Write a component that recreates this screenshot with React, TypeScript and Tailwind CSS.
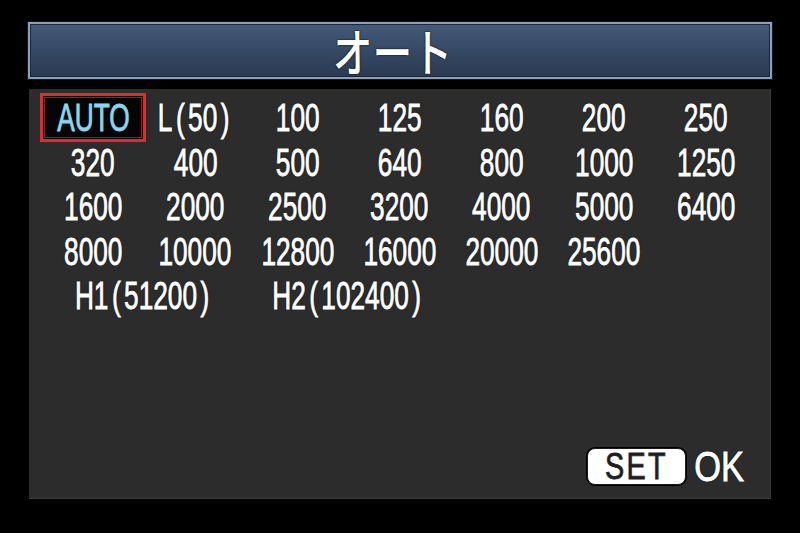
import React from "react";

const rows: string[][] = [
  ["AUTO", "L(50)", "100", "125", "160", "200", "250"],
  ["320", "400", "500", "640", "800", "1000", "1250"],
  ["1600", "2000", "2500", "3200", "4000", "5000", "6400"],
  ["8000", "10000", "12800", "16000", "20000", "25600", ""],
];

function Label({ text, className = "" }: { text: string; className?: string }) {
  const parts = text.split(/([()])/).filter((p) => p !== "");
  return (
    <span
      className={`inline-block whitespace-nowrap scale-x-[0.69] text-[38px] leading-none [-webkit-text-stroke:0.9px_currentColor] [text-shadow:0_0_2px_#000,0_0_1px_#000] ${className}`}
      style={{ fontFamily: '"Liberation Sans", Arial, sans-serif' }}
    >
      {parts.map((p, i) =>
        p === "(" || p === ")" ? (
          <span key={i} className="px-[5px]">
            {p}
          </span>
        ) : (
          <span key={i}>{p}</span>
        )
      )}
    </span>
  );
}

export default function App() {
  return (
    <div className="w-[800px] h-[533px] bg-black overflow-hidden flex flex-col">
      <div className="mx-[28px] mt-[22px] h-[57px] border-2 border-[#8d9fbc] bg-gradient-to-b from-[#435a79] to-[#2a3a51] shadow-[inset_0_0_0_1px_#1c2838,0_0_0_1px_#101824] flex items-center justify-center">
        <span
          className="inline-block scale-x-[0.78] text-[51px] font-medium leading-none text-white mr-[14px] [text-shadow:0_0_2px_#000,0_0_1px_#000]"
          style={{ fontFamily: '"Noto Sans CJK JP", "Noto Sans", sans-serif' }}
        >
          オート
        </span>
      </div>

      <div className="mx-[29px] mt-[10px] h-[410px] bg-[#2c2c2c] border-b border-r border-[#3a3a3a] flex flex-col">
        <div className="grid grid-cols-7 auto-rows-[44.5px] px-[13px] pt-[7px] text-white">
          {rows.map((r, ri) =>
            r.map((v, ci) =>
              ri === 0 && ci === 0 ? (
                <div key={`${ri}-${ci}`} className="relative flex items-center justify-center">
                  <div className="absolute -left-[2px] -right-[2px] -top-[3px] -bottom-[1px] border-[3px] border-[#e8282e] bg-[#050505] shadow-[inset_0_0_0_1px_#000,inset_0_0_0_2px_#9e1a20]" />
                  <Label text={v} className="relative text-[#86d8f2]" />
                </div>
              ) : (
                <div key={`${ri}-${ci}`} className="flex items-center justify-center">
                  {v && <Label text={v} />}
                </div>
              )
            )
          )}
          <div className="col-span-2 flex items-center justify-center">
            <Label text="H1(51200)" />
          </div>
          <div className="col-span-2 flex items-center justify-center">
            <Label text="H2(102400)" />
          </div>
        </div>

        <div className="flex-1" />

        <div className="flex justify-end items-center gap-[8px] pr-[26px] pb-[13px]">
          <div className="w-[99px] h-[37px] rounded-[8px] bg-white border border-[#1a1a1a] shadow-[0_0_0_1px_#000] flex items-center justify-center">
            <span
              className="inline-block scale-x-[0.8] text-[36px] leading-none text-[#1e1e1e] tracking-[3px] [-webkit-text-stroke:0.8px_currentColor]"
              style={{ fontFamily: '"Liberation Sans", Arial, sans-serif' }}
            >
              SET
            </span>
          </div>
          <div className="w-[50px] h-[37px] flex items-center justify-center">
            <span
              className="inline-block scale-x-[0.8] text-[43px] leading-none text-white [-webkit-text-stroke:0.9px_currentColor] [text-shadow:0_0_2px_#000,0_0_1px_#000]"
              style={{ fontFamily: '"Liberation Sans", Arial, sans-serif' }}
            >
              OK
            </span>
          </div>
        </div>
      </div>
    </div>
  );
}
